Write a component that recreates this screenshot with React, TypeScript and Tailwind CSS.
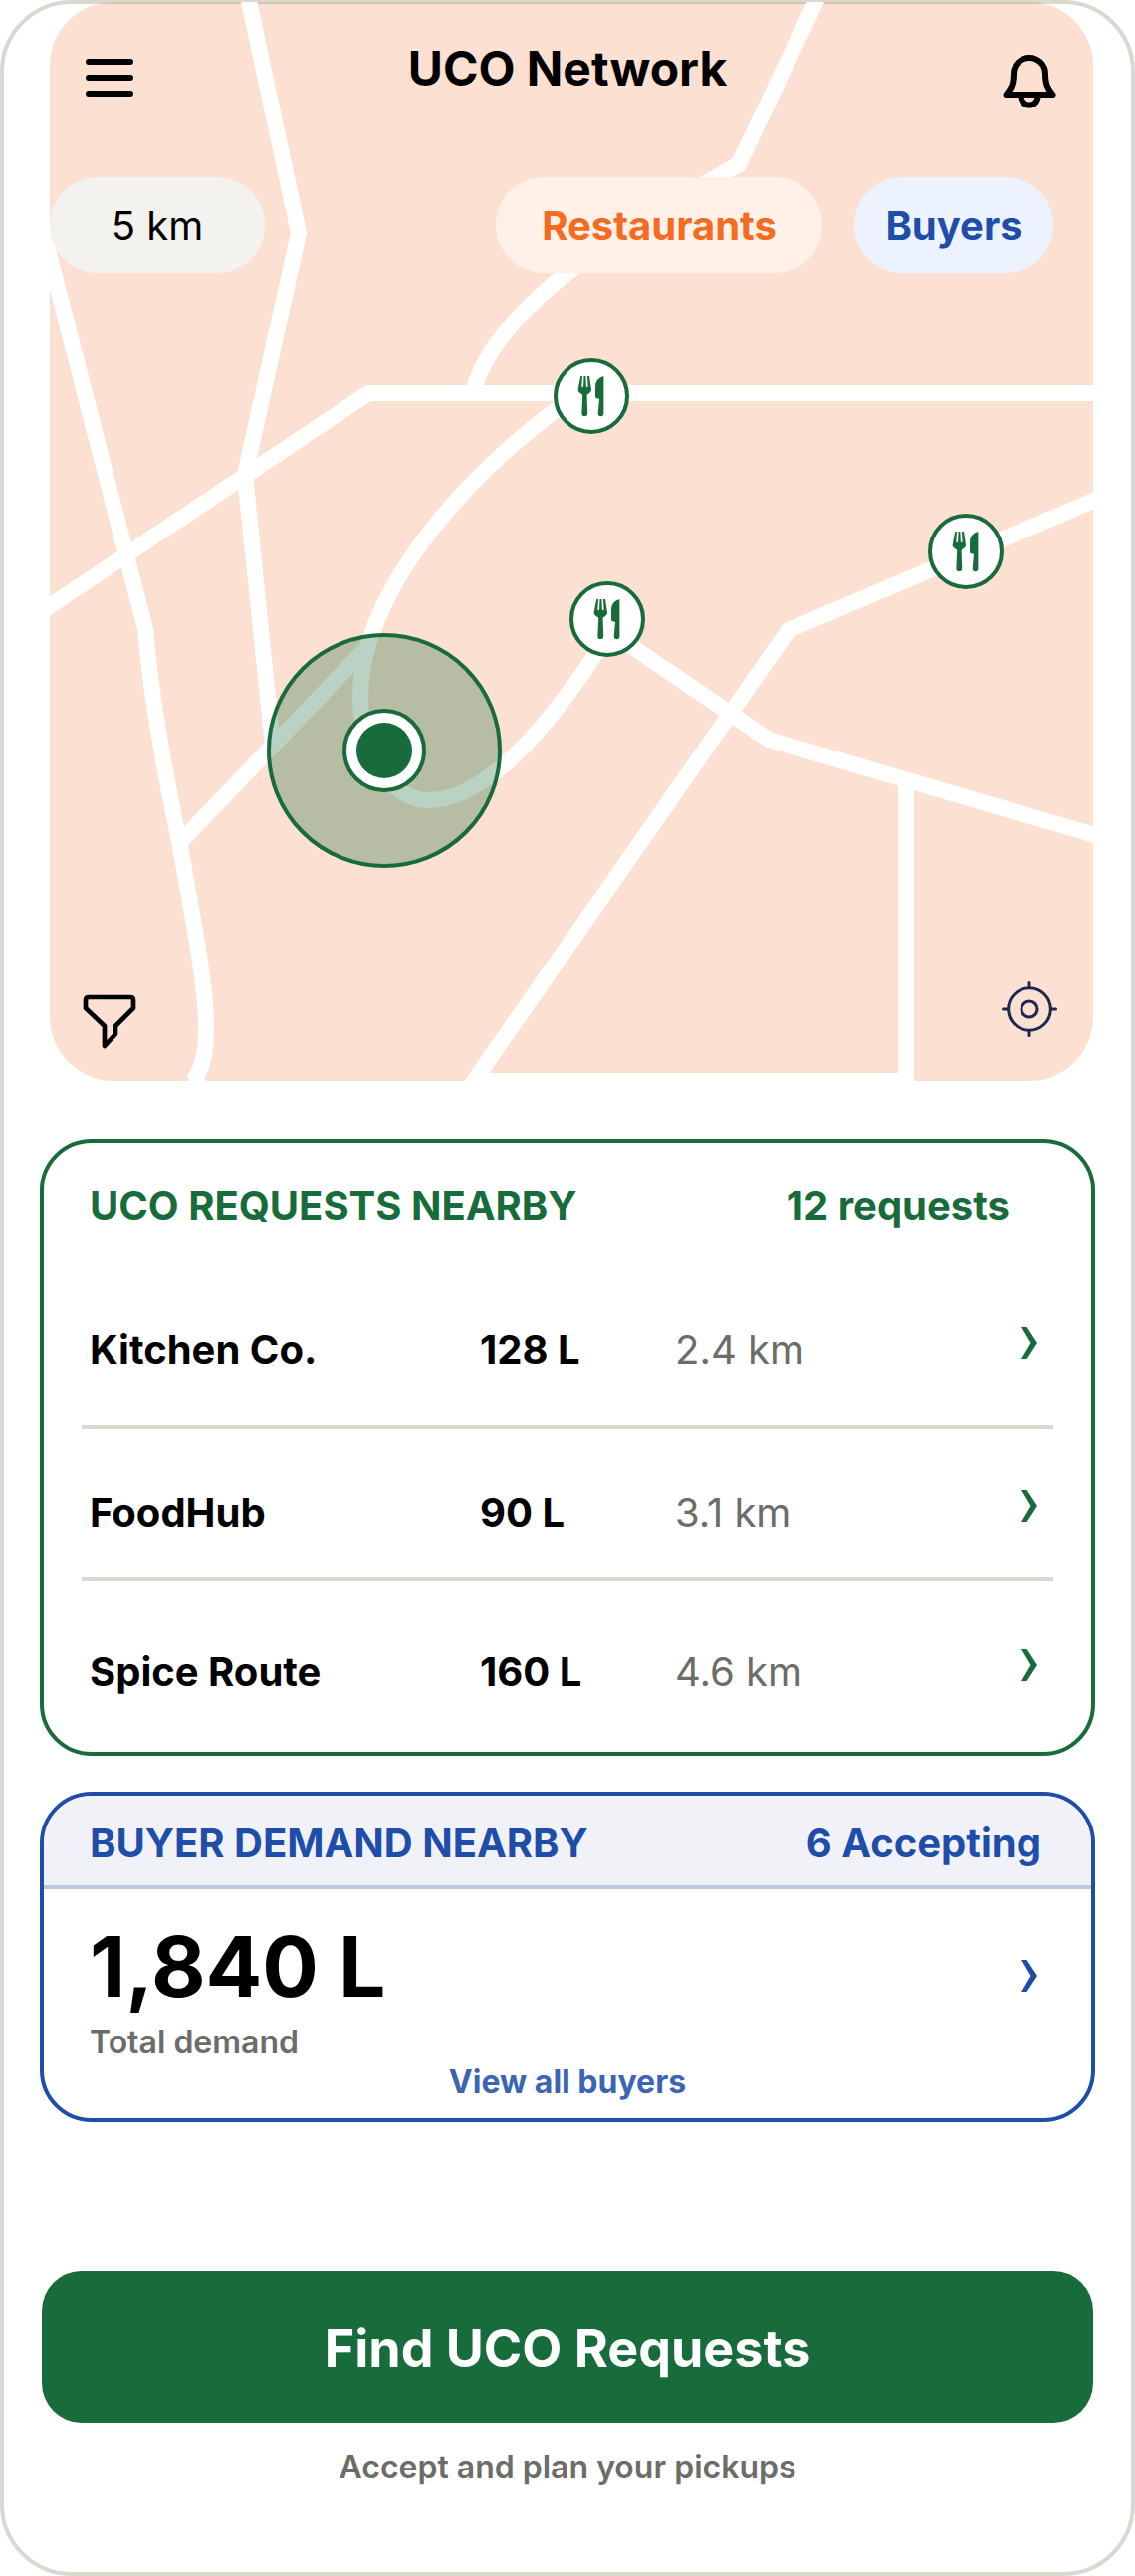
const requests = [
  { name: "Kitchen Co.", volume: "128 L", distance: "2.4 km", cell: "pb-[52px] border-b-4" },
  { name: "FoodHub", volume: "90 L", distance: "3.1 km", cell: "pt-[60px] pb-10 border-b-4" },
  { name: "Spice Route", volume: "160 L", distance: "4.6 km", cell: "pt-[68px] pb-[56px]" },
];

const pins = [
  { x: 594, y: 398 },
  { x: 610, y: 622 },
  { x: 970, y: 554 },
];

function Chevron() {
  return (
    <svg className="w-4 h-8" viewBox="0 0 16 32" fill="currentColor" aria-hidden="true">
      <path d="M0 0h5.5L16 16 5.5 32H0l9.5-16z" />
    </svg>
  );
}

function Pin({ x, y }: { x: number; y: number }) {
  return (
    <g transform={`translate(${x} ${y})`}>
      <circle r="36" fill="#fff" stroke="#186b3b" strokeWidth="4" />
      <g fill="#186b3b">
        <path d="M-10.8-20-13.4-6.5q-.3 2.5 4.6 5.2L-9.6 17.2a2.9 2.9 0 0 0 5.8 0L-4.4-1.3Q.3-4 0-6.5L-2-20h-2l.6 10.2q-.9 2-1.8 0L-5.6-20h-1.9l-.4 10.2q-.9 2-1.8 0L-9-20z" />
        <path d="M12.4-20Q4-17.500 4-9.500V.5Q4 2.500 8 2.700L6.700 17.300a2.850 2.850 0 0 0 5.700 0z" />
      </g>
    </g>
  );
}

function MapCanvas() {
  return (
    <svg
      className="absolute inset-0 w-full h-full"
      viewBox="50 2 1048 1084"
      preserveAspectRatio="xMidYMid slice"
      aria-hidden="true"
    >
      <rect x="50" y="2" width="1048" height="2" fill="#dec0ae" />
      {/* roads */}
      <g fill="none" stroke="#fff" strokeWidth="16">
        <path d="M35 200 146 632C152 700 165 775 180 845C195 930 207 990 207 1030C207 1058 204 1070 197 1082L200 1092" />
        <path d="M248-8 300 234 246 477 274 750" />
        <path d="M38 617 370 395H1110" />
        <path d="M824-8 742 165 690 195C600 245 493 320 475 395" />
        <path d="M600 383C480 460 362 590 362 700C362 760 395 804 430 804C490 804 555 725 606 645" />
        <path d="M182 845 369 650" />
        <path d="M1110 498 792 633 476 1086H910V790" />
        <path d="M606 630 772 743 1110 842" />
      </g>
      {/* current position */}
      <circle cx="386" cy="754" r="116" fill="#186b3b" fillOpacity="0.3" />
      <circle cx="386" cy="754" r="116" fill="none" stroke="#186b3b" strokeWidth="4" />
      <circle cx="386" cy="754" r="40" fill="#fff" stroke="#186b3b" strokeWidth="4" />
      <circle cx="386" cy="754" r="28" fill="#186b3b" />
      {pins.map((pin) => (
        <Pin key={pin.x} x={pin.x} y={pin.y} />
      ))}
    </svg>
  );
}

function MapPanel() {
  return (
    <section className="relative -mt-0.5 ml-[46px] mr-[38px] aspect-[1048/1084] rounded-[64px] overflow-hidden bg-[#fce0d2]">
      <MapCanvas />
      <div className="relative h-full flex flex-col">
        <header className="flex items-start justify-between px-9 pt-9">
          <button aria-label="Menu" className="mt-4">
            <svg className="w-12 h-12" viewBox="0 0 48 48" fill="none" stroke="currentColor" strokeWidth="6" strokeLinecap="round">
              <path d="M3 8h42M3 24h42M3 40h42" />
            </svg>
          </button>
          <h1 className="text-[48px] leading-[62px] font-bold">UCO Network</h1>
          <button aria-label="Notifications" className="mt-4">
            <svg className="w-14 h-14" viewBox="0 0 56 56" fill="none" stroke="currentColor" strokeWidth="6" strokeLinejoin="round">
              <path d="M12 20a16 16 0 0 1 32 0c0 12 3 15 7.500 21h-47C9 35 12 32 12 20z" />
              <path d="M19.500 43a8.500 8.500 0 0 0 17 0" />
            </svg>
          </button>
        </header>

        <div className="flex items-center gap-8 mt-[68px] pr-10 text-[40px] leading-[48px]">
          <button className="mr-auto w-[216px] h-24 pt-0.5 rounded-full bg-[#f3f2ee]">5 km</button>
          <button className="w-[328px] h-24 pt-0.5 rounded-full bg-[#fff1e8] text-[#f46b21] font-bold">
            Restaurants
          </button>
          <button className="w-[200px] h-24 pt-0.5 rounded-full bg-[#ecf3ff] text-[#1e4daa] font-bold">
            Buyers
          </button>
        </div>

        <div className="mt-auto flex items-end justify-between pl-8 pr-9 pb-8">
          <button aria-label="Filter">
            <svg className="w-14 h-14" viewBox="0 0 56 56" fill="none" stroke="currentColor" strokeWidth="4.700" strokeLinejoin="round">
              <path d="M4 7q0-3 3-3h42q3 0 3 3v8L34 33v8L23 53V33L4 15z" />
            </svg>
          </button>
          <button aria-label="Locate me" className="mb-3 text-[#1c2850]">
            <svg className="w-14 h-14" viewBox="0 0 56 56" fill="none" stroke="currentColor" strokeWidth="3" strokeLinecap="round">
              <circle cx="28" cy="28" r="21.300" />
              <circle cx="28" cy="28" r="8" />
              <path d="M28 1.500v5M28 49.500v5M1.500 28h5M49.500 28h5" />
            </svg>
          </button>
        </div>
      </div>
    </section>
  );
}

function RequestsCard() {
  return (
    <section className="mt-[58px] mx-9 border-4 border-[#186b3b] rounded-[52px]">
      <div className="flex justify-between pt-10 pl-[46px] pr-[82px] text-[40px] leading-[48px] text-[#186b3b]">
        <h2 className="font-bold">UCO REQUESTS NEARBY</h2>
        <p className="font-bold">12 requests</p>
      </div>
      <div className="mt-24 px-[38px]">
        <table className="w-full table-fixed border-separate border-spacing-0 text-left text-[40px] leading-[48px]">
          <tbody>
            {requests.map((r) => (
              <tr key={r.name} className="align-top">
                <th scope="row" className={`w-[400px] pl-2 font-bold border-[#d9d9d2] ${r.cell}`}>
                  {r.name}
                </th>
                <td className={`w-[196px] font-bold border-[#d9d9d2] ${r.cell}`}>{r.volume}</td>
                <td className={`text-[#6c6c68] border-[#d9d9d2] ${r.cell}`}>{r.distance}</td>
                <td className={`w-8 border-[#d9d9d2] ${r.cell}`}>
                  <button aria-label={`Open ${r.name}`} className="block pt-px pb-[15px] text-[#186b3b]">
                    <Chevron />
                  </button>
                </td>
              </tr>
            ))}
          </tbody>
        </table>
      </div>
    </section>
  );
}

function BuyersCard() {
  return (
    <section className="mt-9 mx-9 border-4 border-[#1e4daa] rounded-[52px] overflow-hidden">
      <div className="flex justify-between pt-6 pb-[18px] pl-[46px] pr-[50px] border-b-4 border-[#b9c8e4] bg-[#f1f2f7] text-[40px] leading-[48px] text-[#1e4daa]">
        <h2 className="font-bold">BUYER DEMAND NEARBY</h2>
        <p className="font-bold">6 Accepting</p>
      </div>
      <div className="pt-9 pb-4">
        <div className="flex items-start justify-between pl-[46px] pr-[54px]">
          <div>
            <p className="text-[84px] leading-[84px] font-bold">1,840 L</p>
            <p className="mt-3.5 text-[32px] leading-10 font-semibold text-[#6c6c68]">Total demand</p>
          </div>
          <button aria-label="Open buyer demand" className="mt-[35px] text-[#1e4daa]">
            <Chevron />
          </button>
        </div>
        <a href="#buyers" className="block mx-auto w-fit text-[32px] leading-10 font-bold text-[#3b64b4]">
          View all buyers
        </a>
      </div>
    </section>
  );
}

function App() {
  return (
    <main className="border-4 border-[#d9d9d2] rounded-[72px] bg-white text-black font-['Inter',sans-serif]">
      <MapPanel />
      <RequestsCard />
      <BuyersCard />
      <footer className="mt-[150px] px-[38px] pb-[85px] text-center">
        <button className="w-full pt-[46px] pb-[42px] rounded-[40px] bg-[#186b3b] text-[52px] leading-[64px] font-bold text-white">
          Find UCO Requests
        </button>
        <p className="mt-[25px] text-[32px] leading-10 font-semibold text-[#6c6c68]">
          Accept and plan your pickups
        </p>
      </footer>
    </main>
  );
}

export default App;
